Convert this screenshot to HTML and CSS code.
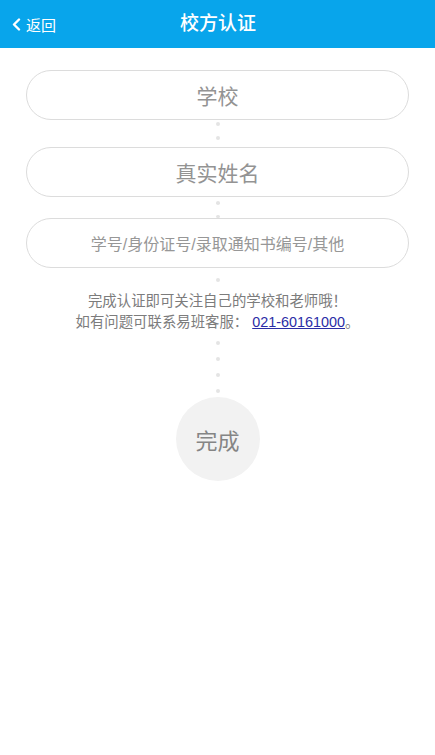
FILE: index.html
```html
<!DOCTYPE html>
<html lang="zh-CN">
<head>
<meta charset="utf-8">
<title>校方认证</title>
<link rel="stylesheet" href="styles.css">
</head>
<body>
<header class="topbar">
  <a class="back">
    <svg class="chev" width="9" height="13" viewBox="0 0 9 13"><path d="M7 1.5 L2 6.5 L7 11.5" fill="none" stroke="#fff" stroke-width="2.4" stroke-linecap="round" stroke-linejoin="round"/></svg>
    <span>返回</span>
  </a>
  <h1 class="title">校方认证</h1>
</header>
<main class="form">
  <div class="pill pill-lg">学校</div>
  <div class="link link-1"><i class="dot"></i><i class="dot"></i></div>
  <div class="pill pill-lg">真实姓名</div>
  <div class="link link-2"><i class="dot"></i><i class="dot"></i></div>
  <div class="pill pill-sm">学号/身份证号/录取通知书编号/其他</div>
  <div class="link link-3"><i class="dot"></i></div>
  <p class="note">完成认证即可关注自己的学校和老师哦！<br>如有问题可联系易班客服： <a class="phone">021-60161000</a>。</p>
  <div class="link link-4"><i class="dot"></i><i class="dot"></i><i class="dot"></i><i class="dot"></i></div>
  <div class="done">完成</div>
</main>
</body>
</html>
```
FILE: styles.css
```css
html, body {
  margin: 0;
  padding: 0;
  background: #ffffff;
}
body {
  font-family: "Liberation Sans", "Noto Sans CJK SC", sans-serif;
  width: 435px;
  height: 755px;
  overflow: hidden;
}
.topbar {
  height: 48px;
  background: #08a5eb;
  display: flex;
  align-items: center;
  justify-content: center;
  position: relative;
}
.back {
  position: absolute;
  left: 12px;
  top: 0;
  height: 48px;
  display: flex;
  align-items: center;
  gap: 5px;
  color: #fff;
  font-size: 15px;
}
.chev {
  display: block;
}
.title {
  margin: 0;
  color: #fff;
  font-size: 19px;
  font-weight: 500;
  line-height: 24px;
  padding-left: 1px;
}
.form {
  display: flex;
  flex-direction: column;
  align-items: center;
  padding: 22px 26px 0;
}
.pill {
  box-sizing: border-box;
  width: 383px;
  height: 50px;
  border: 1px solid #dcdcdc;
  border-radius: 25px;
  display: flex;
  align-items: center;
  justify-content: center;
  color: #939393;
}
.pill-lg {
  font-size: 21px;
}
.pill-sm {
  font-size: 16px;
  color: #979797;
}
.link {
  display: flex;
  flex-direction: column;
  align-items: center;
  box-sizing: border-box;
}
.dot {
  display: block;
  width: 4px;
  height: 4px;
  border-radius: 50%;
  background: #e4e4e4;
}
.link-1 {
  height: 27px;
  padding-top: 2px;
  gap: 10px;
}
.link-2 {
  height: 21px;
  padding-top: 4px;
  gap: 10px;
}
.link-3 {
  height: 23px;
  padding-top: 10px;
}
.note {
  margin: 0;
  text-align: center;
  font-size: 14.4px;
  line-height: 21px;
  color: #7c7c7c;
}
.phone {
  color: #2b2ca6;
  text-decoration: underline;
  font-family: "Liberation Sans", sans-serif;
}
.link-4 {
  padding-top: 8px;
  gap: 12px;
  height: 64px;
}
.done {
  width: 84px;
  height: 84px;
  border-radius: 50%;
  background: #f2f2f2;
  color: #858585;
  font-size: 22px;
  display: flex;
  align-items: center;
  justify-content: center;
}
```
